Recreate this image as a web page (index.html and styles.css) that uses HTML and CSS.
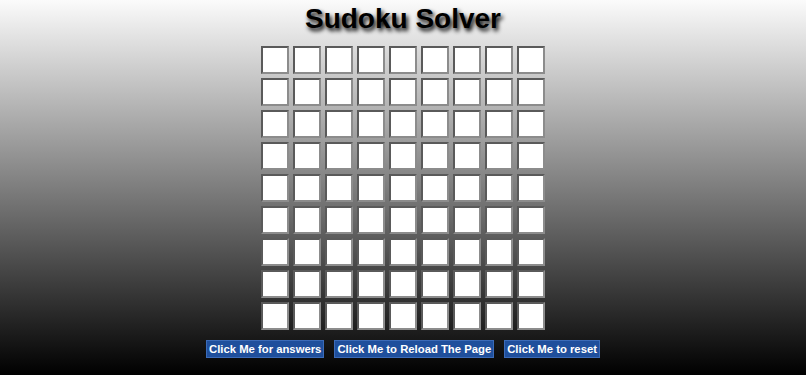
FILE: index.html
```html
<!DOCTYPE html>
<html lang="en">
<head>
    <meta charset="UTF-8">
    <meta name="viewport" content="width=device-width, initial-scale=1.0">
    <title>Sudoku Solver</title>
    <link rel="stylesheet" href="styles.css">
</head>
<body>
    <h1 class="title">Sudoku Solver</h1>

    <div class="board" id="board"></div>

    <div class="controls">
        <button class="btn" id="solve-btn">Click Me for answers</button>
        <button class="btn" id="reload-btn">Click Me to Reload The Page</button>
        <button class="btn" id="reset-btn">Click Me to reset</button>
    </div>

    <script>
        document.addEventListener('DOMContentLoaded', () => {
            const board = document.getElementById('board');

            // Build the 9x9 grid of inputs
            for (let i = 0; i < 81; i++) {
                const cell = document.createElement('input');
                cell.type = 'text';
                cell.maxLength = 1;
                cell.classList.add('cell');
                cell.setAttribute('data-index', i);
                board.appendChild(cell);
            }

            document.getElementById('reload-btn').addEventListener('click', () => {
                location.reload();
            });

            document.getElementById('reset-btn').addEventListener('click', () => {
                board.querySelectorAll('.cell').forEach(cell => {
                    cell.value = '';
                });
            });
        });
    </script>
</body>
</html>
```

FILE: styles.css
```css
body {
    margin: 0;
    height: 100vh;
    background: linear-gradient(#fbfbfb, #000);
    font-family: 'Liberation Sans', Arial, sans-serif;
    display: flex;
    flex-direction: column;
    align-items: center;
    overflow: hidden;
}

.title {
    margin: 0;
    padding-top: 3px;
    font-size: 28px;
    font-weight: bold;
    line-height: 32px;
    color: #000;
    text-shadow: 2px 3px 4px #000;
}

.board {
    display: grid;
    grid-template-columns: repeat(9, 28px);
    grid-auto-rows: 28px;
    gap: 4px;
    margin-top: 11px;
}

.cell {
    box-sizing: border-box;
    width: 28px;
    height: 28px;
    margin: 0;
    padding: 0;
    background-color: #fff;
    border: 2px solid;
    border-color: #5a5a5a #8c8c8c #8c8c8c #5a5a5a;
    font-size: 16px;
    text-align: center;
}

.controls {
    display: flex;
    gap: 10px;
    margin-top: 10px;
}

.btn {
    height: 18px;
    margin: 0;
    padding: 0 2px;
    background-color: #1f4f9c;
    border: 1px solid #3b6bb8;
    color: #fff;
    font-family: 'Liberation Sans', Arial, sans-serif;
    font-size: 11.3px;
    font-weight: bold;
    line-height: 16px;
    cursor: pointer;
}
```
